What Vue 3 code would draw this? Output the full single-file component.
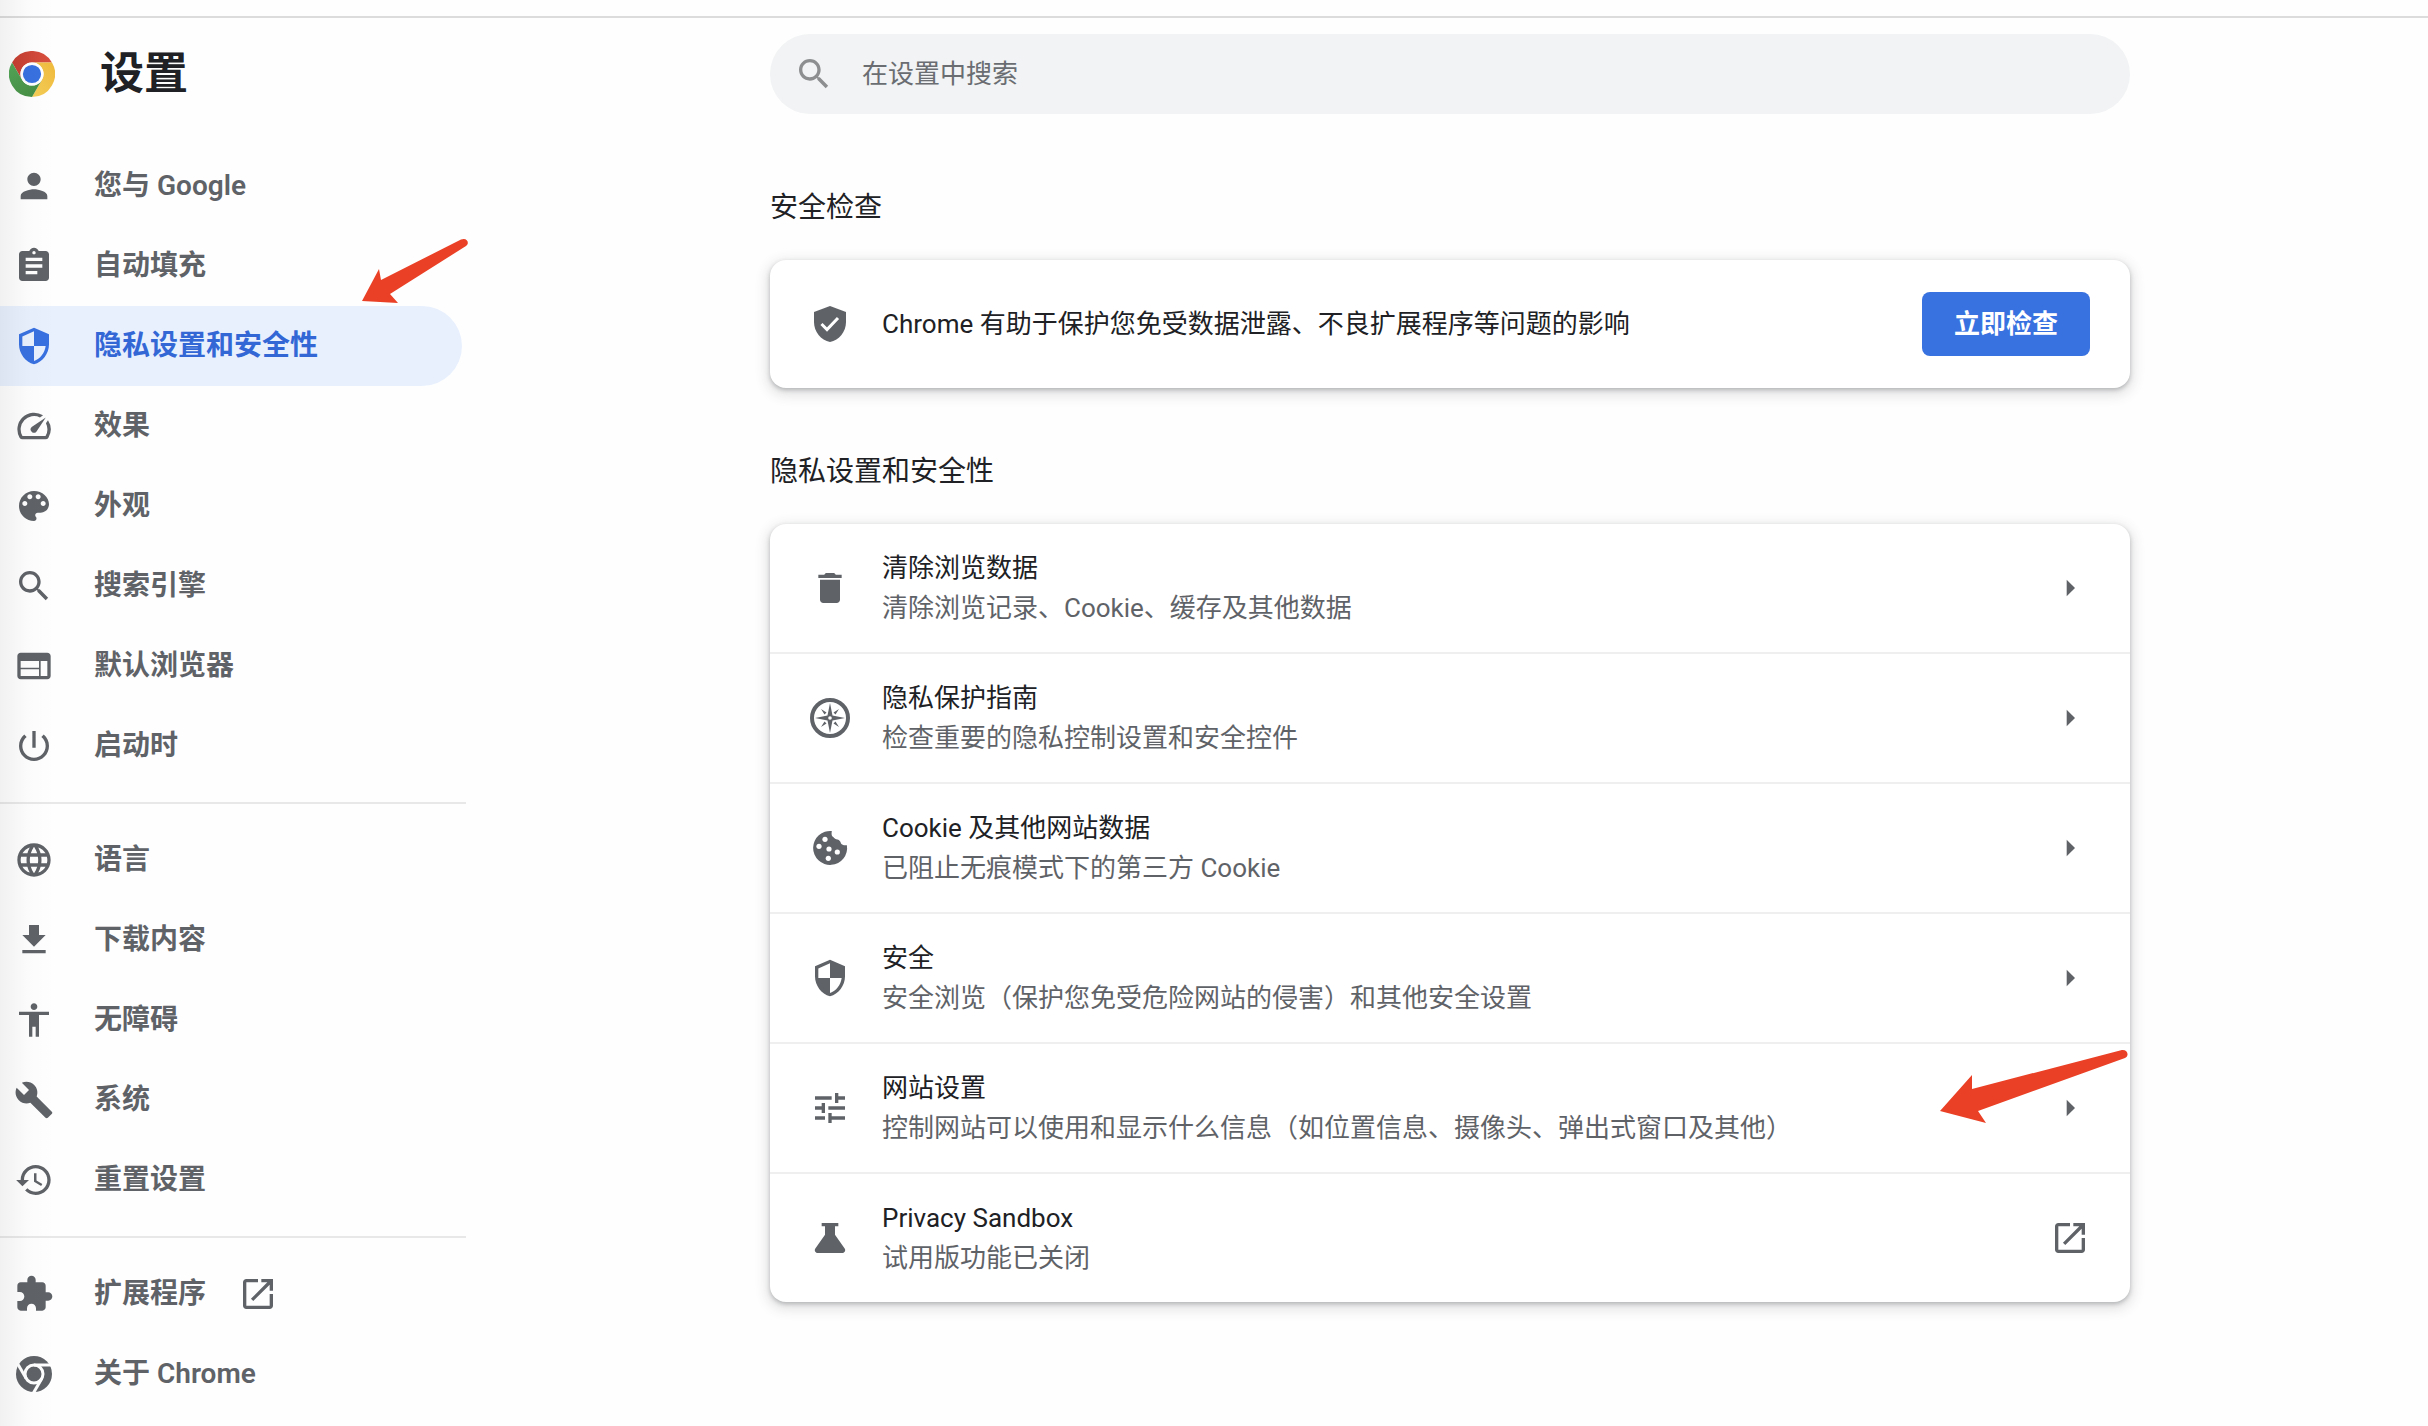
<script setup>
import { ref } from 'vue'

const query = ref('')

// Icons on a 24-unit grid
const icons = {
  person: 'M12 12c2.21 0 4-1.79 4-4s-1.79-4-4-4-4 1.79-4 4 1.79 4 4 4zm0 2c-2.67 0-8 1.34-8 4v2h16v-2c0-2.66-5.33-4-8-4z',
  assignment: 'M19 3h-4.18C14.4 1.84 13.3 1 12 1c-1.3 0-2.4.84-2.82 2H5c-1.1 0-2 .9-2 2v14c0 1.1.9 2 2 2h14c1.1 0 2-.9 2-2V5c0-1.1-.9-2-2-2zm-7 0c.55 0 1 .45 1 1s-.45 1-1 1-1-.45-1-1 .45-1 1-1zm2 14H7v-2h7v2zm3-4H7v-2h10v2zm0-4H7V7h10v2z',
  shield: 'M12 1L3 5v6c0 5.55 3.84 10.74 9 12 5.16-1.26 9-6.45 9-12V5l-9-4zM12 12H5V6.3l7-3.11zM12 12h7c-.53 4.12-3.28 7.79-7 8.94z',
  speed: 'M20.38 8.57l-1.23 1.85a8 8 0 0 1-.22 7.58H5.07A8 8 0 0 1 15.58 6.85l1.85-1.23A10 10 0 0 0 3.35 19a2 2 0 0 0 1.72 1h13.85a2 2 0 0 0 1.74-1 10 10 0 0 0-.27-10.44zm-9.79 6.84a2 2 0 0 0 2.83 0l5.66-8.49-8.49 5.66a2 2 0 0 0 0 2.83z',
  palette: 'M12 3c-4.97 0-9 4.03-9 9s4.03 9 9 9c.83 0 1.5-.67 1.5-1.5 0-.39-.15-.74-.39-1.01-.23-.26-.38-.61-.38-.99 0-.83.67-1.5 1.5-1.5H16c2.76 0 5-2.24 5-5 0-4.42-4.03-8-9-8zm-5.5 9c-.83 0-1.5-.67-1.5-1.5S5.67 9 6.5 9 8 9.67 8 10.5 7.33 12 6.5 12zm3-4C8.67 8 8 7.33 8 6.5S8.67 5 9.5 5s1.5.67 1.5 1.5S10.33 8 9.5 8zm5 0c-.83 0-1.5-.67-1.5-1.5S13.67 5 14.5 5s1.5.67 1.5 1.5S15.33 8 14.5 8zm3 4c-.83 0-1.5-.67-1.5-1.5S16.67 9 17.5 9s1.5.67 1.5 1.5-.67 1.5-1.5 1.5z',
  search: 'M15.5 14h-.79l-.28-.27C15.41 12.59 16 11.11 16 9.5 16 5.91 13.09 3 9.5 3S3 5.91 3 9.5 5.91 16 9.5 16c1.61 0 3.09-.59 4.23-1.57l.27.28v.79l5 4.99L20.49 19l-4.99-5zm-6 0C7.01 14 5 11.99 5 9.5S7.01 5 9.5 5 14 7.01 14 9.5 11.99 14 9.5 14z',
  web: 'M20 4H4c-1.1 0-1.99.9-1.99 2L2 18c0 1.1.9 2 2 2h16c1.1 0 2-.9 2-2V6c0-1.1-.9-2-2-2zm-5 14H4v-4h11v4zm0-5H4V9h11v4zm5 5h-4V9h4v9z',
  power: 'M13 3h-2v10h2V3zm4.83 2.17l-1.42 1.42C17.99 7.86 19 9.81 19 12c0 3.87-3.13 7-7 7s-7-3.13-7-7c0-2.19 1.01-4.14 2.58-5.42L6.17 5.17C4.23 6.82 3 9.26 3 12c0 4.97 4.03 9 9 9s9-4.03 9-9c0-2.74-1.23-5.18-3.17-6.83z',
  language: 'M11.99 2C6.47 2 2 6.48 2 12s4.47 10 9.99 10C17.52 22 22 17.52 22 12S17.52 2 11.99 2zm6.93 6h-2.95c-.32-1.25-.78-2.45-1.38-3.56 1.84.63 3.37 1.91 4.33 3.56zM12 4.04c.83 1.2 1.48 2.53 1.91 3.96h-3.82c.43-1.43 1.08-2.76 1.91-3.96zM4.26 14C4.1 13.36 4 12.69 4 12s.1-1.36.26-2h3.38c-.08.66-.14 1.32-.14 2 0 .68.06 1.34.14 2H4.26zm.82 2h2.95c.32 1.25.78 2.45 1.38 3.56-1.84-.63-3.37-1.9-4.33-3.56zm2.95-8H5.08c.96-1.66 2.49-2.93 4.33-3.56C8.81 5.55 8.35 6.75 8.03 8zM12 19.96c-.83-1.2-1.48-2.53-1.91-3.96h3.82c-.43 1.43-1.08 2.76-1.91 3.96zM14.34 14H9.66c-.09-.66-.16-1.32-.16-2 0-.68.07-1.35.16-2h4.68c.09.65.16 1.32.16 2 0 .68-.07 1.34-.16 2zm.25 5.56c.6-1.11 1.06-2.31 1.38-3.56h2.95c-.96 1.65-2.49 2.93-4.33 3.56zM16.36 14c.08-.66.14-1.32.14-2 0-.68-.06-1.34-.14-2h3.38c.16.64.26 1.31.26 2s-.1 1.36-.26 2h-3.38z',
  download: 'M19 9h-4V3H9v6H5l7 7 7-7zM5 18v2h14v-2H5z',
  accessibility: 'M12 2c1.1 0 2 .9 2 2s-.9 2-2 2-2-.9-2-2 .9-2 2-2zm9 7h-6v13h-2v-6h-2v6H9V9H3V7h18v2z',
  build: 'M22.7 19l-9.1-9.1c.9-2.3.4-5-1.5-6.9-2-2-5-2.4-7.4-1.3L9 6 6 9 1.6 4.7C.4 7.1.9 10.1 2.9 12.1c1.9 1.9 4.6 2.4 6.9 1.5l9.1 9.1c.4.4 1 .4 1.4 0l2.3-2.3c.5-.4.5-1.1.1-1.4z',
  restore: 'M13 3c-4.97 0-9 4.03-9 9H1.300l3.750 3.750L9 12H6c0-3.87 3.13-7 7-7s7 3.13 7 7-3.13 7-7 7c-1.93 0-3.68-.79-4.94-2.06l-1.42 1.42C8.27 19.99 10.51 21 13 21c4.97 0 9-4.03 9-9s-4.03-9-9-9zm-1 5v5l4.28 2.54.72-1.21-3.5-2.08V8H12z',
  extension: 'M20.5 11H19V7c0-1.1-.9-2-2-2h-4V3.5C13 2.12 11.88 1 10.5 1S8 2.12 8 3.5V5H4c-1.1 0-1.99.9-1.99 2v3.8H3.5c1.49 0 2.7 1.21 2.7 2.7s-1.21 2.7-2.7 2.7H2V20c0 1.1.9 2 2 2h3.8v-1.5c0-1.49 1.21-2.7 2.7-2.7 1.49 0 2.7 1.21 2.7 2.7V22H17c1.1 0 2-.9 2-2v-4h1.500c1.38 0 2.5-1.12 2.5-2.5S21.88 11 20.5 11z',
  external: 'M19 19H5V5h7V3H5c-1.11 0-2 .9-2 2v14c0 1.1.89 2 2 2h14c1.1 0 2-.9 2-2v-7h-2v7zM14 3v2h3.59l-9.83 9.83 1.41 1.41L19 6.41V10h2V3h-7z',
  trash: 'M6 19c0 1.1.9 2 2 2h8c1.1 0 2-.9 2-2V7H6v12zM19 4h-3.5l-1-1h-5l-1 1H5v2h14V4z',
  tune: 'M3 5h10v2H3zM15 3h2v2h4v2h-4v2h-2zM7 9h2v6H7v-2H3v-2h4zM11 11h10v2H11zM3 17h6v2H3zM11 15h2v2h8v2h-8v2h-2z',
  flask: 'M7 3h10v2h-2v5l5.8 8.300c.8 1.200 0 2.700-1.400 2.700H4.600c-1.400 0-2.200-1.500-1.400-2.700L9 10V5H7z',
  arrow: 'M10 7l5 5-5 5z',
}

const navGroups = [
  [
    { label: '您与 Google', icon: 'person' },
    { label: '自动填充', icon: 'assignment' },
    { label: '隐私设置和安全性', icon: 'shield', selected: true },
    { label: '效果', icon: 'speed' },
    { label: '外观', icon: 'palette' },
    { label: '搜索引擎', icon: 'search' },
    { label: '默认浏览器', icon: 'web' },
    { label: '启动时', icon: 'power' },
  ],
  [
    { label: '语言', icon: 'language' },
    { label: '下载内容', icon: 'download' },
    { label: '无障碍', icon: 'accessibility' },
    { label: '系统', icon: 'build' },
    { label: '重置设置', icon: 'restore' },
  ],
  [
    { label: '扩展程序', icon: 'extension', external: true },
    { label: '关于 Chrome', icon: 'chrome' },
  ],
]

const rows = [
  { title: '清除浏览数据', sub: '清除浏览记录、Cookie、缓存及其他数据', icon: 'trash' },
  { title: '隐私保护指南', sub: '检查重要的隐私控制设置和安全控件', icon: 'compass' },
  { title: 'Cookie 及其他网站数据', sub: '已阻止无痕模式下的第三方 Cookie', icon: 'cookie' },
  { title: '安全', sub: '安全浏览（保护您免受危险网站的侵害）和其他安全设置', icon: 'shield' },
  { title: '网站设置', sub: '控制网站可以使用和显示什么信息（如位置信息、摄像头、弹出式窗口及其他）', icon: 'tune', marked: true },
  { title: 'Privacy Sandbox', sub: '试用版功能已关闭', icon: 'flask', external: true },
]
</script>

<template>
  <div class="page" lang="zh-CN">
    <header class="toolbar">
      <div class="brand">
        <svg class="logo" viewBox="0 0 48 48" aria-hidden="true">
          <defs>
            <linearGradient id="red" x1="0" y1="0" x2="1" y2="0">
              <stop offset="0" stop-color="#c53f31" /><stop offset="1" stop-color="#d9503f" />
            </linearGradient>
            <linearGradient id="green" x1="0" y1="0" x2="1" y2="1">
              <stop offset="0" stop-color="#55a95a" /><stop offset="1" stop-color="#438a41" />
            </linearGradient>
            <linearGradient id="yellow" x1="1" y1="0" x2="0" y2="1">
              <stop offset="0" stop-color="#efb93c" /><stop offset="1" stop-color="#f5cf58" />
            </linearGradient>
          </defs>
          <path fill="url(#red)" d="M24 12H44.800A24 24 0 0 0 3.200 12L13.600 30A12 12 0 0 1 24 12z" />
          <path fill="url(#yellow)" d="M24 12H44.800A24 24 0 0 1 24 48L34.400 30A12 12 0 0 0 24 12z" />
          <path fill="url(#green)" d="M3.200 12A24 24 0 0 0 24 48L34.400 30A12 12 0 0 1 13.600 30z" />
          <circle cx="24" cy="24" r="12" fill="#fff" />
          <circle cx="24" cy="24" r="9.500" fill="#3871e0" />
        </svg>
        <h1>设置</h1>
      </div>
      <div class="search-area">
        <label class="search">
          <svg class="icon" viewBox="0 0 24 24" aria-hidden="true"><path :d="icons.search" /></svg>
          <input v-model="query" type="search" placeholder="在设置中搜索" aria-label="在设置中搜索" />
        </label>
      </div>
    </header>

    <div class="body">
      <nav class="sidebar">
        <ul v-for="(group, g) in navGroups" :key="g" class="group">
          <li v-for="item in group" :key="item.label" class="nav-item">
            <a href="#" class="nav-link" :class="{ selected: item.selected }">
              <svg v-if="item.icon === 'chrome'" class="icon" viewBox="0 0 40 40" aria-hidden="true">
                <circle cx="20" cy="20" r="18" />
                <g fill="none" stroke="#fff" stroke-width="3">
                  <circle cx="20" cy="20" r="9" />
                  <path d="M20 11H38" />
                  <path d="M20 11H38" transform="rotate(120 20 20)" />
                  <path d="M20 11H38" transform="rotate(240 20 20)" />
                </g>
              </svg>
              <svg v-else class="icon" viewBox="0 0 24 24" aria-hidden="true">
                <path fill-rule="evenodd" :d="icons[item.icon]" />
              </svg>
              <span>{{ item.label }}</span>
              <svg v-if="item.external" class="icon launch" viewBox="0 0 24 24" aria-hidden="true">
                <path :d="icons.external" />
              </svg>
            </a>
            <svg v-if="item.selected" class="pointer nav-pointer" viewBox="0 0 108 68" aria-hidden="true">
              <path d="M1 64L18 32L20 43L100 2.500C106 0 109 6 105 9L29 57L37 66z" />
            </svg>
          </li>
        </ul>
      </nav>

      <main class="main">
        <div class="column">
          <section>
            <h2>安全检查</h2>
            <div class="card">
              <div class="row">
                <svg class="icon" viewBox="0 0 40 40" aria-hidden="true">
                  <path d="M20 2L4 8v10c0 9.800 6.800 18 16 20 9.200-2 16-10.200 16-20V8z" />
                  <path d="M11.500 20l5.500 5.500L28 14" fill="none" stroke="#fff" stroke-width="3" />
                </svg>
                <p class="text title">Chrome 有助于保护您免受数据泄露、不良扩展程序等问题的影响</p>
                <button type="button" class="action">立即检查</button>
              </div>
            </div>
          </section>

          <section>
            <h2>隐私设置和安全性</h2>
            <div class="card">
              <button v-for="row in rows" :key="row.title" type="button" class="row link-row">
                <svg v-if="row.icon === 'compass'" class="icon" viewBox="0 0 40 40" aria-hidden="true">
                  <circle cx="20" cy="20" r="18" fill="none" stroke="currentColor" stroke-width="4" />
                  <path d="M20 5L22.500 17.500L35 20L22.500 22.500L20 35L17.500 22.500L5 20L17.500 17.500z" />
                  <path d="M11 11l5.500 3.500-2 2zM29 11l-5.500 3.500 2 2zM11 29l5.500-3.500-2-2zM29 29l-5.500-3.500 2-2z" />
                  <circle cx="20" cy="20" r="1.800" fill="#fff" />
                </svg>
                <svg v-else-if="row.icon === 'cookie'" class="icon" viewBox="0 0 40 40" aria-hidden="true">
                  <path d="M21.800 3A17 17 0 1 0 36.900 17.200C34 17.500 32 17 31 15.500C30.500 13.500 29.500 12 27.500 11.500C25.500 11.500 24.500 10 23.500 9.200C21.500 8.500 21.300 6 21.800 3z" />
                  <g fill="#fff">
                    <circle cx="15" cy="11.300" r="2.600" />
                    <circle cx="9" cy="18.300" r="2.600" />
                    <circle cx="19" cy="21" r="2.600" />
                    <circle cx="27.300" cy="24" r="2.600" />
                    <circle cx="18.300" cy="30.300" r="2.600" />
                  </g>
                </svg>
                <svg v-else class="icon" viewBox="0 0 24 24" aria-hidden="true">
                  <path fill-rule="evenodd" :d="icons[row.icon]" />
                </svg>
                <span class="text">
                  <span class="title">{{ row.title }}</span>
                  <span class="sub">{{ row.sub }}</span>
                </span>
                <svg class="icon" viewBox="0 0 24 24" aria-hidden="true">
                  <path :d="row.external ? icons.external : icons.arrow" />
                </svg>
                <svg v-if="row.marked" class="pointer row-pointer" viewBox="0 0 190 76" aria-hidden="true">
                  <path d="M1 63L33 27L33 41L182 2.200C189 1 190.500 8 186 10L39 63L47 75z" />
                </svg>
              </button>
            </div>
          </section>
        </div>
      </main>
    </div>
    <div class="edge-shade"></div>
  </div>
</template>

<style>
body {
  margin: 0;
  background: #fefefe;
}
</style>

<style scoped>
.page {
  position: relative;
  box-sizing: border-box;
  min-height: 100vh;
  padding-top: 16px;
  background: #fefefe;
  color: #202124;
  font-family: Roboto, "Noto Sans CJK SC", sans-serif;
  font-size: 26px;
  line-height: 40px;
}

.edge-shade {
  position: absolute;
  inset: 0 auto 0 0;
  width: 56px;
  background: linear-gradient(to right, rgba(0, 0, 0, 0.05), rgba(0, 0, 0, 0.01) 50%, rgba(0, 0, 0, 0));
  pointer-events: none;
}

.icon {
  flex: none;
  width: 40px;
  height: 40px;
  fill: currentColor;
  color: #5f6368;
}

.toolbar {
  display: flex;
  align-items: center;
  height: 112px;
  border-top: 2px solid #dcdcdc;
}

.brand {
  display: flex;
  flex: none;
  align-items: center;
  gap: 45px;
  box-sizing: border-box;
  width: 472px;
  padding-left: 9px;
}

.logo {
  width: 46px;
  height: 46px;
}

h1 {
  margin: 0;
  font-size: 44px;
  font-weight: 600;
  line-height: 64px;
}

.search-area,
.main {
  display: flex;
  flex: 1;
  justify-content: center;
  min-width: 0;
}

.search {
  display: flex;
  flex: 1;
  align-items: center;
  gap: 28px;
  box-sizing: border-box;
  max-width: 1360px;
  height: 80px;
  padding: 0 24px;
  border-radius: 40px;
  background: #f1f3f4;
}

.search .icon {
  color: #8c8e90;
}

.search input {
  flex: 1;
  min-width: 0;
  padding: 0;
  border: 0;
  outline: 0;
  background: transparent;
  color: #202124;
  font: inherit;
}

.search input::placeholder {
  color: #6a6d71;
  opacity: 1;
}

.body {
  display: flex;
  align-items: flex-start;
}

.sidebar {
  box-sizing: border-box;
  flex: none;
  width: 472px;
  padding: 16px 6px 0 0;
}

.group {
  margin: 0;
  padding: 0;
  list-style: none;
}

.group + .group {
  margin-top: 16px;
  padding-top: 16px;
  border-top: 2px solid #e8e8e8;
}

.nav-item {
  position: relative;
}

.nav-link {
  display: flex;
  align-items: center;
  height: 80px;
  margin-right: 4px;
  padding-left: 14px;
  border-radius: 0 40px 40px 0;
  color: #5f6368;
  font-size: 28px;
  font-weight: 600;
  text-decoration: none;
}

.nav-link span {
  margin-left: 40px;
}

.nav-link .launch {
  margin-left: 32px;
}

.nav-link.selected {
  background: #e8f0fe;
  color: #3367d6;
}

.nav-link.selected .icon {
  color: #3871e0;
}

.column {
  flex: 1;
  max-width: 1360px;
  min-width: 0;
  padding-top: 58px;
}

section + section {
  margin-top: 64px;
}

h2 {
  margin: 0 0 32px;
  font-size: 28px;
  font-weight: 400;
  line-height: 40px;
}

.card {
  border-radius: 16px;
  background: #fff;
  box-shadow: 0 2px 4px rgba(60, 64, 67, 0.3), 0 4px 12px 4px rgba(60, 64, 67, 0.13);
}

.row {
  position: relative;
  display: flex;
  align-items: center;
  gap: 32px;
  box-sizing: border-box;
  width: 100%;
  min-height: 128px;
  padding: 0 40px;
}

.link-row {
  border: 0;
  background: none;
  font: inherit;
  text-align: left;
  cursor: pointer;
}

.link-row + .link-row {
  min-height: 130px;
  border-top: 2px solid #efefef;
}

.text {
  flex: 1;
  min-width: 0;
  margin: 0;
}

.title,
.sub {
  display: block;
}

.title {
  color: #202124;
}

.sub {
  color: #5f6368;
}

.action {
  flex: none;
  height: 64px;
  padding: 0 32px;
  border: 0;
  border-radius: 8px;
  background: #3871e0;
  color: #fff;
  font: inherit;
  font-weight: 600;
  cursor: pointer;
}

.pointer {
  position: absolute;
  fill: #ea4025;
  pointer-events: none;
}

.nav-pointer {
  right: -3px;
  bottom: 81px;
  width: 108px;
  height: 68px;
}

.row-pointer {
  top: 4px;
  right: 1px;
  width: 190px;
  height: 76px;
}
</style>
